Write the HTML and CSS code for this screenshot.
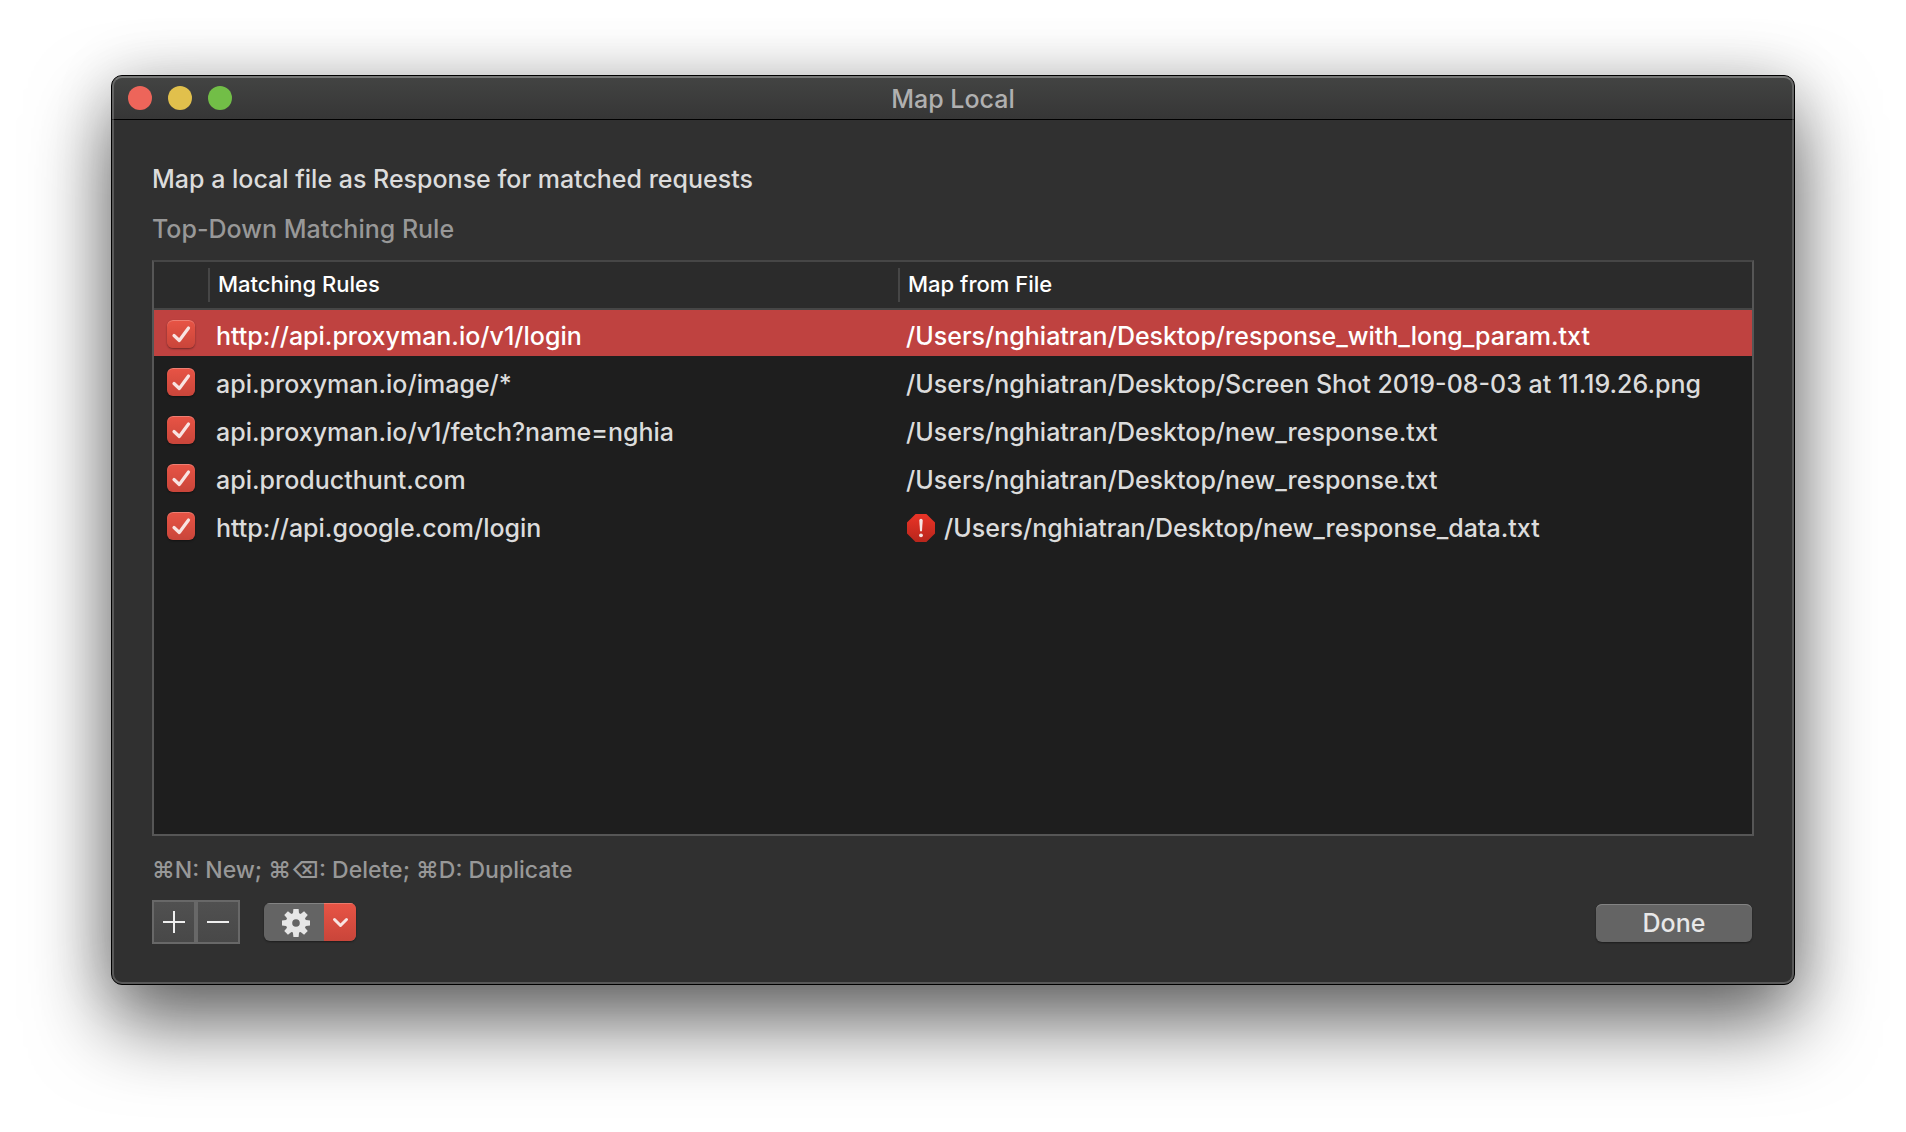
FILE: index.html
```html
<!DOCTYPE html>
<html lang="en">
<head>
<meta charset="utf-8">
<title>Map Local</title>
<link rel="stylesheet" href="styles.css">
</head>
<body>
<main class="window">
  <header class="titlebar">
    <div class="lights">
      <button class="light light-close" aria-label="Close"></button>
      <button class="light light-minimize" aria-label="Minimize"></button>
      <button class="light light-zoom" aria-label="Zoom"></button>
    </div>
    <h1 class="title">Map Local</h1>
  </header>
  <div class="content">
    <p class="lead">Map a local file as Response for matched requests</p>
    <p class="sub">Top-Down Matching Rule</p>
    <div class="table-box">
      <table class="rules">
        <colgroup><col class="col-check"><col class="col-rule"><col></colgroup>
        <thead>
          <tr><td></td><th scope="col">Matching Rules</th><th scope="col">Map from File</th></tr>
        </thead>
        <tbody>
          <tr class="selected">
            <td class="cell-check"><input type="checkbox" class="check" aria-labelledby="rule1" checked></td>
            <td id="rule1">http://api.proxyman.io/v1/login</td>
            <td>/Users/nghiatran/Desktop/response_with_long_param.txt</td>
          </tr>
          <tr>
            <td class="cell-check"><input type="checkbox" class="check" aria-labelledby="rule2" checked></td>
            <td id="rule2">api.proxyman.io/image/*</td>
            <td>/Users/nghiatran/Desktop/Screen Shot 2019-08-03 at 11.19.26.png</td>
          </tr>
          <tr>
            <td class="cell-check"><input type="checkbox" class="check" aria-labelledby="rule3" checked></td>
            <td id="rule3">api.proxyman.io/v1/fetch?name=nghia</td>
            <td>/Users/nghiatran/Desktop/new_response.txt</td>
          </tr>
          <tr>
            <td class="cell-check"><input type="checkbox" class="check" aria-labelledby="rule4" checked></td>
            <td id="rule4">api.producthunt.com</td>
            <td>/Users/nghiatran/Desktop/new_response.txt</td>
          </tr>
          <tr>
            <td class="cell-check"><input type="checkbox" class="check" aria-labelledby="rule5" checked></td>
            <td id="rule5">http://api.google.com/login</td>
            <td>
              <div class="file">
                <svg class="alert" viewBox="0 0 28 28" role="img" aria-label="File not found">
                  <defs><linearGradient id="stop" x1="0" y1="0" x2="0" y2="1"><stop offset="0" stop-color="#ea3427"/><stop offset="1" stop-color="#b8261c"/></linearGradient></defs>
                  <path d="M8.6 0h10.8L28 8.600v10.800L19.400 28H8.600L0 19.400V8.600z" fill="url(#stop)"/>
                  <path d="M12.300 6.500a1.700 1.700 0 0 1 3.400 0l-.7 10.800h-2z" fill="#f6e4e2"/>
                  <circle cx="14" cy="21.300" r="1.900" fill="#f6e4e2"/>
                </svg>
                <span>/Users/nghiatran/Desktop/new_response_data.txt</span>
              </div>
            </td>
          </tr>
        </tbody>
      </table>
    </div>
    <p class="hint">⌘N: New; ⌘⌫: Delete; ⌘D: Duplicate</p>
    <div class="actions">
      <div class="pair">
        <button class="square" aria-label="Add"><svg viewBox="0 0 40 40"><path d="M9 20h22M20 9v22"/></svg></button>
        <button class="square" aria-label="Remove"><svg viewBox="0 0 40 40"><path d="M9 20h22"/></svg></button>
      </div>
      <button class="gear" aria-label="Options">
        <span class="gear-face">
          <svg viewBox="-14 -14 28 28" fill="#e6e6e6">
            <defs><path id="tooth" d="M-2.600 -14h5.200l.6 6h-6.400z"/></defs>
            <circle r="7" fill="none" stroke="#e6e6e6" stroke-width="6.400"/>
            <use href="#tooth"/><use href="#tooth" transform="rotate(45)"/><use href="#tooth" transform="rotate(90)"/><use href="#tooth" transform="rotate(135)"/><use href="#tooth" transform="rotate(180)"/><use href="#tooth" transform="rotate(225)"/><use href="#tooth" transform="rotate(270)"/><use href="#tooth" transform="rotate(315)"/>
          </svg>
        </span>
        <span class="gear-arrow"><svg viewBox="0 0 32 38"><path d="M10.500 16.500l6 6 6-6"/></svg></span>
      </button>
      <button class="done">Done</button>
    </div>
  </div>
</main>
</body>
</html>
```
FILE: styles.css
```css
* { box-sizing: border-box; }

body {
  margin: 0;
  min-height: 100vh;
  padding: 75px 111px 147px;
  display: flex;
  background: #fff;
  color: #dcdcdc;
  font: 500 25px/32px Inter, "Liberation Sans", sans-serif;
}

h1, p { margin: 0; font-weight: 500; }

button {
  margin: 0;
  padding: 0;
  border: 0;
  font: inherit;
  color: inherit;
}

svg { display: block; }

.window {
  position: relative;
  flex: 1;
  min-width: 0;
  display: flex;
  flex-direction: column;
  border: 1px solid #000;
  border-radius: 11px;
  background: #303030;
  box-shadow: 0 38px 80px rgba(0, 0, 0, .6), 0 0 60px rgba(0, 0, 0, .14);
}

/* light rim drawn over the window's edge */
.window::after {
  content: "";
  position: absolute;
  inset: 0;
  border: 2px solid rgba(255, 255, 255, .2);
  border-top-color: rgba(255, 255, 255, .28);
  border-radius: 10px;
  pointer-events: none;
}

.titlebar {
  display: grid;
  grid-template-columns: 1fr auto 1fr;
  align-items: center;
  height: 44px;
  padding: 0 16px;
  border-bottom: 1px solid #000;
  border-radius: 10px 10px 0 0;
  background: linear-gradient(#434443, #363636);
}

.lights { display: flex; gap: 16px; }

.light { width: 24px; height: 24px; border-radius: 50%; }
.light-close { background: #ed655a; }
.light-minimize { background: #e1c04c; }
.light-zoom { background: #72be47; }

.title { padding-top: 2px; font-size: 25px; color: #b0b0b0; }

.content {
  flex: 1;
  display: flex;
  flex-direction: column;
  padding: 43px 40px 40px;
}

.sub { margin-top: 18px; color: #989898; }

.table-box {
  flex: 1;
  margin-top: 15px;
  border: 2px solid #565656;
  border-top-color: #464646;
  background: #1e1e1e;
}

.rules {
  width: 100%;
  table-layout: fixed;
  border-spacing: 0;
}

.col-check { width: 54px; }
.col-rule { width: 690px; }

.rules td, .rules th {
  height: 48px;
  padding: 6px 8px 0;
  border-bottom: 2px solid #1e1e1e;
  text-align: left;
  white-space: nowrap;
}

.rules thead td, .rules th {
  padding: 0 10px 2px;
  border-bottom-color: #464646;
  background: #2b2b2b;
  color: #fff;
  font-size: 22px;
  font-weight: 500;
}

.rules th { background: #2b2b2b linear-gradient(#464646, #464646) no-repeat left center / 2px 34px; }

.selected td { background: #bf4240; color: #fff; }

.rules .cell-check { padding: 2px 0 0 13px; }

.check {
  appearance: none;
  display: block;
  width: 28px;
  height: 28px;
  margin: 0;
  border-radius: 6px;
  background: linear-gradient(#e85445, #c9453a);
  box-shadow: inset 0 1px 0 rgba(255, 255, 255, .25), 0 1px 2px rgba(0, 0, 0, .4);
}

.check:checked {
  background-image:
    url("data:image/svg+xml,%3Csvg xmlns='http://www.w3.org/2000/svg' viewBox='0 0 28 28'%3E%3Cpath d='M7 15.500l5.300 5L21.500 8' fill='none' stroke='%23f8e4e2' stroke-width='3.200' stroke-linecap='round' stroke-linejoin='round'/%3E%3C/svg%3E"),
    linear-gradient(#e85445, #c9453a);
}

.file { display: flex; align-items: center; gap: 9px; padding-left: 1px; }
.alert { width: 28px; height: 28px; }

.hint { margin-top: 18px; font-size: 23px; color: #989898; }

.actions { display: flex; align-items: center; margin-top: 14px; }

.pair { display: flex; }

.square {
  width: 44px;
  height: 44px;
  border: 2px solid #686868;
  background: linear-gradient(#505050, #484848);
}

.square path { fill: none; stroke: #efefef; stroke-width: 2; }

.gear {
  display: flex;
  width: 92px;
  height: 38px;
  margin-left: 24px;
  border-radius: 6px;
  overflow: hidden;
  background: #646464;
  box-shadow: 0 1px 2px rgba(0, 0, 0, .4);
}

.gear-face { flex: 1; padding: 6px 0 0 18px; box-shadow: inset 0 1px 0 #838383; }
.gear-face svg { width: 28px; height: 28px; }
.gear-arrow { width: 32px; background: linear-gradient(#e85445, #c9453a); box-shadow: inset 0 1px 0 #ec7a6c; }
.gear-arrow path { fill: none; stroke: #f8e4e2; stroke-width: 3; stroke-linecap: round; stroke-linejoin: round; }

.done {
  width: 156px;
  height: 38px;
  margin: 2px 2px 0 auto;
  border-radius: 6px;
  background: #646464;
  box-shadow: inset 0 1px 0 #838383, 0 1px 2px rgba(0, 0, 0, .4);
  color: #e8e8e8;
}
```
